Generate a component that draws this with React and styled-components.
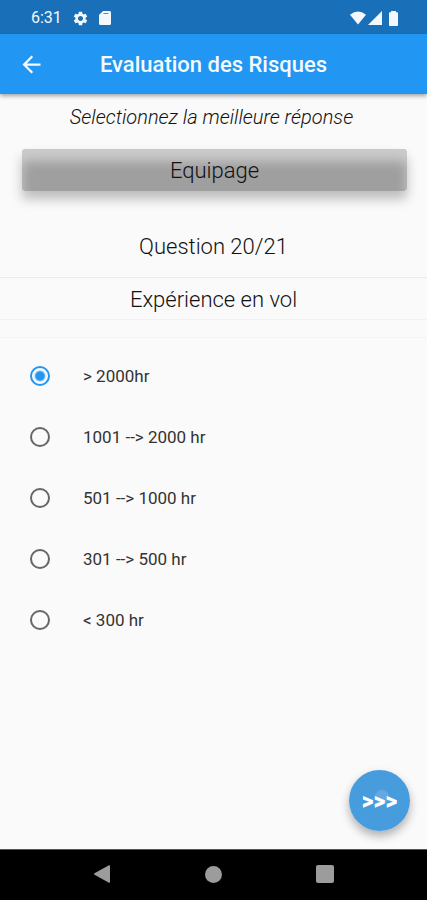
import React, { useState } from 'react';
import styled, { createGlobalStyle } from 'styled-components';
import { MdArrowBack, MdSettings } from 'react-icons/md';

const GlobalStyle = createGlobalStyle`
  * {
    box-sizing: border-box;
  }

  body {
    margin: 0;
    background: #fafafa;
    color: #111;
    font-family: Roboto, 'Liberation Sans', sans-serif;
  }
`;

const Screen = styled.div`
  min-height: 100vh;
  display: flex;
  flex-direction: column;
`;

const StatusBar = styled.div`
  height: 34px;
  flex-shrink: 0;
  display: flex;
  align-items: center;
  justify-content: space-between;
  padding: 2px 29px 0 31px;
  background: #1a70b8;
  color: #f2f8fd;
`;

const StatusGroup = styled.div`
  display: flex;
  align-items: center;
  gap: ${({ $gap }) => $gap}px;
`;

const Clock = styled.span`
  font-size: 16px;
  line-height: 20px;
`;

const AppBar = styled.header`
  height: 60px;
  flex-shrink: 0;
  display: grid;
  grid-template-columns: 62px 1fr 62px;
  align-items: center;
  background: #2196f3;
  color: #f5faff;
  box-shadow: 0 2px 4px rgba(0, 0, 0, 0.35);
`;

const BackButton = styled.button`
  height: 60px;
  display: flex;
  align-items: center;
  justify-content: center;
  padding: 0;
  border: 0;
  background: none;
  color: inherit;
  cursor: pointer;
`;

const Title = styled.h1`
  margin: 0;
  padding-top: 2px;
  font-size: 22px;
  font-weight: 500;
  line-height: 28px;
  text-align: center;
`;

const Content = styled.main`
  flex: 1;
  display: flex;
  flex-direction: column;
`;

const Hint = styled.p`
  margin: 10px 4px 19px 0;
  font-size: 20px;
  font-style: italic;
  font-weight: 300;
  line-height: 26px;
  text-align: center;
`;

const CategoryButton = styled.button`
  height: 42px;
  margin: 0 20px 0 22px;
  padding: 2px 0 0;
  border: 0;
  border-radius: 4px;
  background: #9f9f9f;
  color: #111;
  font-family: inherit;
  font-size: 22px;
  font-weight: 300;
  line-height: 28px;
  box-shadow:
    inset 0 12px 12px rgba(212, 212, 212, 0.85),
    0 8px 12px rgba(0, 0, 0, 0.25);
  cursor: pointer;
`;

const QuestionNumber = styled.h2`
  margin: 0;
  padding: 42px 0 16px;
  font-size: 22px;
  font-weight: 300;
  line-height: 28px;
  text-align: center;
`;

const QuestionText = styled.h3`
  margin: 0;
  padding: 8px 0 5px;
  border-top: 1px solid #ececec;
  border-bottom: 1px solid #f2f2f2;
  font-size: 22px;
  font-weight: 300;
  line-height: 28px;
  text-align: center;
`;

const Answers = styled.fieldset`
  min-width: 0;
  margin: 17px 0 0;
  padding: 7px 0 0;
  border: 0;
  border-top: 1px solid #f4f4f4;
`;

const Answer = styled.label`
  height: 61px;
  display: flex;
  align-items: center;
  gap: 33px;
  padding-left: 30px;
  color: #333;
  font-size: 17px;
  line-height: 24px;
  cursor: pointer;
`;

const Radio = styled.input`
  appearance: none;
  width: 20px;
  height: 20px;
  margin: 0;
  border: 2px solid #666;
  border-radius: 50%;
  cursor: pointer;

  &:checked {
    border-color: #2196f3;
    background: radial-gradient(circle, #2196f3 4px, transparent 6px);
  }
`;

const NextButton = styled.button`
  width: 61px;
  height: 61px;
  flex-shrink: 0;
  align-self: flex-end;
  margin: auto 17px 18px 0;
  padding: 2px 0 0;
  border: 0;
  border-radius: 50%;
  background: radial-gradient(circle at 33px 27px, #66a8df 6px, #479cde 8px);
  color: #fff;
  font-family: inherit;
  font-size: 23px;
  font-weight: 900;
  line-height: 28px;
  box-shadow: 0 5px 10px rgba(0, 0, 0, 0.3);
  cursor: pointer;
`;

const NavBar = styled.nav`
  height: 51px;
  flex-shrink: 0;
  display: grid;
  grid-template-columns: repeat(3, 26%);
  justify-content: center;
  align-items: center;
  justify-items: center;
  border-top: 1px solid #555;
  background: #000;
`;

const NavButton = styled.button`
  width: 32px;
  height: 32px;
  display: flex;
  align-items: center;
  justify-content: center;
  padding: 0 0 2px;
  border: 0;
  background: none;
  color: #9c9c9c;
  cursor: pointer;
`;

const SdCardIcon = () => (
  <svg width="12" height="14" viewBox="0 0 12 14" fill="currentColor">
    <path fillRule="evenodd" d="M4 0h6.5A1.5 1.5 0 0 1 12 1.5v11a1.5 1.5 0 0 1-1.5 1.5h-9A1.5 1.5 0 0 1 0 12.5V4zM4.500 2v.8h5V2z" />
  </svg>
);

const WifiIcon = () => (
  <svg width="16" height="14" viewBox="0 0 17 14" fill="currentColor">
    <path d="M0 3.5Q8.5-3.5 17 3.5L8.5 14z" />
  </svg>
);

const SignalIcon = () => (
  <svg width="14" height="14" viewBox="0 0 14 14" fill="currentColor">
    <path d="M14 0v14H0z" />
  </svg>
);

const BatteryIcon = () => (
  <svg width="9" height="15" viewBox="0 0 9 15" fill="currentColor">
    <path d="M2 0h5v1.200h1a1 1 0 0 1 1 1V14a1 1 0 0 1-1 1H1a1 1 0 0 1-1-1V2.200a1 1 0 0 1 1-1h1z" />
  </svg>
);

const answers = ['> 2000hr', '1001 --> 2000 hr', '501 --> 1000 hr', '301 --> 500 hr', '< 300 hr'];

const App = () => {
  const [selected, setSelected] = useState(answers[0]);

  return (
    <Screen>
      <GlobalStyle />
      <StatusBar>
        <StatusGroup $gap={10}>
          <Clock>6:31</Clock>
          <MdSettings size={17} />
          <SdCardIcon />
        </StatusGroup>
        <StatusGroup $gap={2}>
          <WifiIcon />
          <StatusGroup $gap={7}>
            <SignalIcon />
            <BatteryIcon />
          </StatusGroup>
        </StatusGroup>
      </StatusBar>

      <AppBar>
        <BackButton aria-label="Retour">
          <MdArrowBack size={27} />
        </BackButton>
        <Title>Evaluation des Risques</Title>
      </AppBar>

      <Content>
        <Hint>Selectionnez la meilleure réponse</Hint>
        <CategoryButton>Equipage</CategoryButton>
        <QuestionNumber>Question 20/21</QuestionNumber>
        <QuestionText id="question">Expérience en vol</QuestionText>

        <Answers aria-labelledby="question">
          {answers.map((answer) => (
            <Answer key={answer}>
              <Radio
                type="radio"
                name="experience"
                value={answer}
                checked={selected === answer}
                onChange={() => setSelected(answer)}
              />
              {answer}
            </Answer>
          ))}
        </Answers>

        <NextButton aria-label="Question suivante">&gt;&gt;&gt;</NextButton>
      </Content>

      <NavBar>
        <NavButton aria-label="Retour">
          <svg width="16" height="18" viewBox="0 0 16 18" fill="currentColor">
            <path d="M15 0.300Q16 0 16 1v16q0 1-1 .7L.5 9.700Q-.3 9 .5 8.300z" />
          </svg>
        </NavButton>
        <NavButton aria-label="Accueil">
          <svg width="17" height="17" viewBox="0 0 17 17" fill="currentColor">
            <circle cx="8.500" cy="8.500" r="8.500" />
          </svg>
        </NavButton>
        <NavButton aria-label="Applications">
          <svg width="18" height="18" viewBox="0 0 18 18" fill="currentColor">
            <rect width="18" height="18" rx="2" />
          </svg>
        </NavButton>
      </NavBar>
    </Screen>
  );
};

export default App;
